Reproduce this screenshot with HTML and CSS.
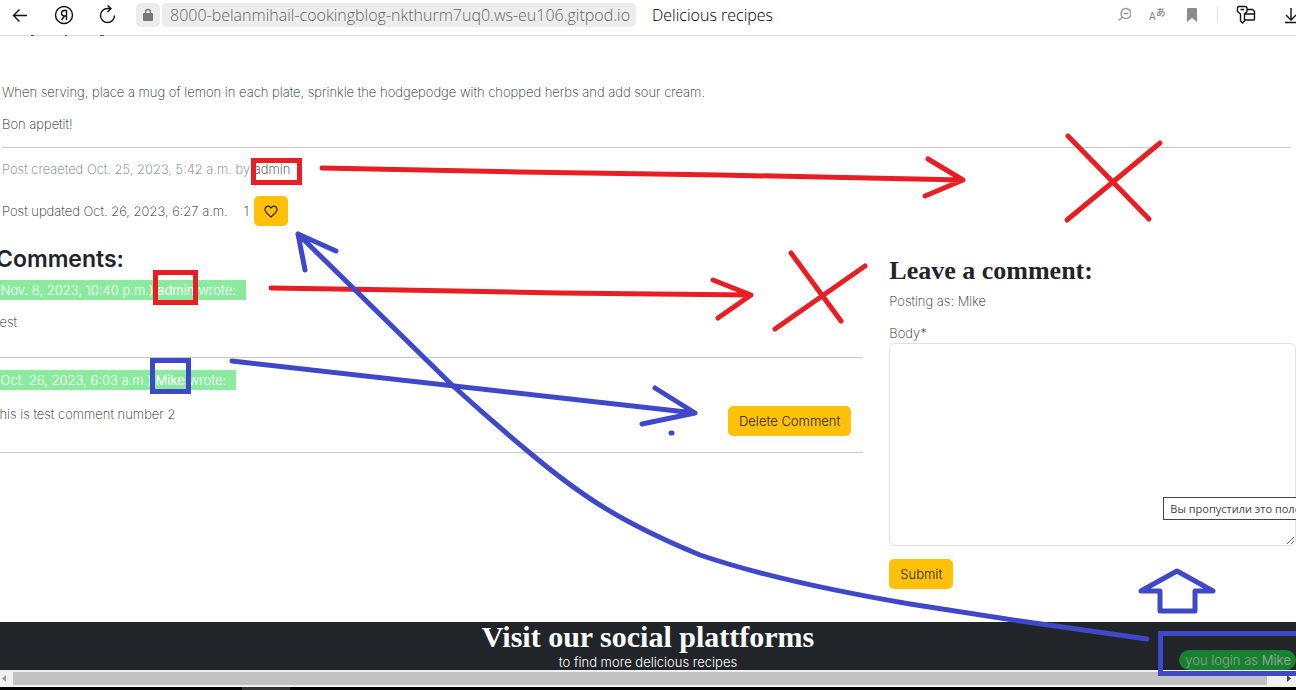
FILE: index.html
```html
<!DOCTYPE html>
<html lang="en">
<head>
<meta charset="utf-8">
<title>Delicious recipes</title>
<link rel="stylesheet" href="styles.css">
</head>
<body>
<header class="toolbar">
  <nav class="nav-buttons" aria-label="Browser">
    <button class="icon-btn" aria-label="Back"><svg width="20" height="20" viewBox="0 0 20 20"><path d="M17 10.500H3.500M9.500 4.500l-6 6 6 6"/></svg></button>
    <button class="icon-btn" aria-label="Home"><svg width="20" height="20" viewBox="0 0 20 20"><circle cx="10" cy="10" r="8.500"/><path d="M12.500 15V5.500H10.500C6.500 5.500 6.500 11 10.500 11H12.500M10.500 11L7.500 15"/></svg></button>
    <button class="icon-btn" aria-label="Reload"><svg width="20" height="20" viewBox="0 0 20 20"><path d="M12.500 3.500H9.500A7 7 0 1 0 16.500 10.500M9.500 0.500L13 3.500 9.500 7"/></svg></button>
  </nav>
  <div class="address">
    <button class="lock" aria-label="Site security"><svg width="12" height="14" viewBox="0 0 12 14"><rect x="1" y="5" width="10" height="8" rx="1" fill="#777"/><path d="M3.500 6V4a2.500 2.500 0 0 1 5 0V6" fill="none" stroke="#777" stroke-width="1.300"/></svg></button>
    <a class="url" href="#">8000-belanmihail-cookingblog-nkthurm7uq0.ws-eu106.gitpod.io</a>
  </div>
  <span class="page-title">Delicious recipes</span>
  <div class="tools">
    <button class="icon-btn muted" aria-label="Zoom out"><svg width="16" height="16" viewBox="0 0 16 16"><circle cx="11" cy="6.500" r="5"/><path d="M8.500 6.500h5M7.500 10L3.500 13.500"/></svg></button>
    <button class="icon-btn muted translate" aria-label="Translate"><span class="latin">A</span><span class="kana">あ</span></button>
    <button class="icon-btn muted" aria-label="Bookmark"><svg width="16" height="16" viewBox="0 0 16 16"><path d="M5 1h8a1 1 0 0 1 1 1v13l-5-4-5 4V2a1 1 0 0 1 1-1z" fill="#8c8c8c" stroke="none"/></svg></button>
    <span class="divider"></span>
    <button class="icon-btn" aria-label="Passwords"><svg width="20" height="20" viewBox="0 0 20 20"><path d="M3 1.500h6q2 0 2 2v3L8.500 9v7l-2 2-2-2V9L1.500 6.500v-3q0-2 1.500-2zM4.500 4.500h3.500M11 4.500h5.500l2 2v7.500q0 1-1 1H8.500M9 9h9.500"/></svg></button>
    <button class="icon-btn download" aria-label="Downloads"><svg width="20" height="20" viewBox="0 0 20 20"><path d="M10 3v12M5 10l5 5 5-5M4 17.500h14"/></svg></button>
  </div>
</header>

<main class="page">
  <article class="post">
    <p>When serving, place a mug of lemon in each plate, sprinkle the hodgepodge with chopped herbs and add sour cream.</p>
    <p>Bon appetit!</p>
    <hr>
    <p class="created">Post creaeted Oct. 25, 2023, 5:42 a.m. by <a href="#">admin</a></p>
    <div class="updated">
      <span>Post updated Oct. 26, 2023, 6:27 a.m.</span>
      <span class="likes">1 <button class="btn like" aria-label="Like"><svg width="14" height="13" viewBox="0 0 14 13"><path d="M7 12C5 10 1 7.500 1 4.500C1 1 5 0 7 3C9 0 13 1 13 4.500C13 7.500 9 10 7 12z" fill="none" stroke="#212529" stroke-width="1.200"/></svg></button></span>
    </div>
  </article>

  <div class="columns">
    <section class="comments">
      <h2>Comments:</h2>
      <div class="comment">
        <p class="meta">(Nov. 8, 2023, 10:40 p.m.) <b>admin</b> wrote:</p>
        <p>test</p>
      </div>
      <div class="comment own">
        <p class="meta">(Oct. 26, 2023, 6:03 a.m.) <b>Mike</b> wrote:</p>
        <div class="comment-row">
          <p>this is test comment number 2</p>
          <button class="btn delete">Delete Comment</button>
        </div>
      </div>
    </section>

    <section class="reply">
      <h3>Leave a comment:</h3>
      <p>Posting as: Mike</p>
      <form>
        <label for="body">Body*</label>
        <div class="field">
          <textarea id="body"></textarea>
          <span class="tip" role="tooltip">Вы пропустили это поле</span>
        </div>
        <button class="btn submit" type="button">Submit</button>
      </form>
    </section>
  </div>
</main>

<footer class="footer">
  <h2>Visit our social plattforms</h2>
  <p>to find more delicious recipes</p>
  <span class="login">you login as <b>Mike</b></span>
</footer>
<div class="scrollbar" aria-hidden="true">
  <svg width="13" height="17" viewBox="0 0 13 17"><path d="M6 5v7L2 8.500z" fill="#999"/></svg>
  <span class="thumb"></span>
  <svg width="29" height="17" viewBox="0 0 29 17"><path d="M20 5v7l4-3.500z" fill="#444"/></svg>
</div>
<div class="taskbar"><span></span></div>

<svg class="marks" viewBox="0 0 1296 690" aria-hidden="true">
  <path class="scrap" d="M31 35.500h3M65 35.500h2M100 35.500h4"/>
  <g class="red">
    <path d="M322 168L520 172 720 175 963 180M928 159L963 180 925 196"/>
    <path d="M1068 136L1149 219M1160 143L1067 220"/>
    <path d="M271 288L400 290 560 293 751 295M713 280L751 295 718 318"/>
    <path d="M791 253L841 321M865 266L775 329"/>
    <path class="box" d="M253.500 160.500h46v22h-46zM155.500 272.500h40v30h-40z"/>
  </g>
  <g class="blue">
    <path d="M232 361L695 413M655 388L695 413 642 424"/>
    <path d="M1147 639L1020 621 910 604C810 587 750 572 700 555C620 522 580 495 530 453C500 428 475 406 452 385L298 234M336 251L298 234 305 270"/>
    <path d="M671 433h1"/>
    <path d="M1177 571L1213 591H1195V611H1160V591H1141z"/>
    <path class="box" d="M152.500 360.500h36v31h-36zM1300 633.500H1160.500v40H1300"/>
  </g>
</svg>
</body>
</html>
```
FILE: styles.css
```css
* { box-sizing: border-box; }

body {
  position: relative;
  display: flex;
  flex-direction: column;
  min-height: 100vh;
  margin: 0;
  overflow-x: hidden;
  background: #fff;
  color: #212529;
  font: 200 13px/20px Inter, "Noto Sans", sans-serif;
}

p, h2, h3 { margin: 0; }
a { color: inherit; text-decoration: none; }
b { font-weight: 400; }
button { font: inherit; color: inherit; border: 0; cursor: pointer; }

.toolbar {
  display: flex;
  align-items: center;
  height: 36px;
  padding: 0 0 5px 10px;
  border-bottom: 1px solid #dcdcdc;
  color: #000;
  font: 300 16px/24px "Open Sans", "Noto Sans", sans-serif;
  white-space: nowrap;
}
.nav-buttons { display: flex; gap: 24px; }
.icon-btn {
  display: flex;
  align-items: center;
  padding: 0;
  background: none;
}
.icon-btn svg { fill: none; stroke: #111; stroke-width: 1.4; }
.icon-btn.muted svg { stroke: #999; }
.address { display: flex; gap: 2px; margin-left: 18px; }
.lock {
  display: grid;
  place-items: center;
  width: 24px;
  height: 24px;
  padding: 0;
  border-radius: 5px;
  background: #ececec;
}
.url {
  padding: 0 6px 0 8px;
  border-radius: 5px;
  background: #ececec;
  color: #666;
}
.page-title { margin-left: 16px; }
.tools {
  display: flex;
  align-items: center;
  gap: 18px;
  margin-left: auto;
  margin-right: -5px;
}
.translate {
  width: 16px;
  color: #888;
  font: 500 10px/16px "Liberation Sans", "Noto Sans CJK JP", sans-serif;
}
.translate .latin { padding-top: 4px; }
.translate .kana { padding-bottom: 4px; }
.divider { width: 1px; height: 16px; background: #ddd; }
.download { margin-left: 7px; }

.page { flex: 1; padding-top: 46px; overflow: hidden; }
.post { padding: 0 5px 0 2px; }
.post p { margin-bottom: 12px; }
.post hr { height: 1px; margin: 13px 0 11px; border: 0; background: #c8c9ca; }
.post .created { margin-bottom: 17px; color: #6c757d; }
.created a { color: #212529; }
.updated { display: flex; align-items: center; gap: 16px; }
.likes { display: flex; align-items: center; gap: 5px; }
.btn {
  height: 30px;
  padding: 0 11px;
  border-radius: 5px;
  background: #ffc107;
  font-weight: 300;
}
.btn.like { display: flex; align-items: center; padding: 0 10px; }

.columns {
  display: grid;
  grid-template-columns: 209fr 98fr;
  gap: 26px;
  margin-left: -4px;
}
.comments { padding-top: 20px; }
.comments h2 { margin-bottom: 7px; font: 600 23px/27px Inter, sans-serif; }
.comment { height: 78px; border-bottom: 1px solid #c8c9ca; }
.comment.own { height: 95px; padding-top: 12px; }
.meta {
  width: fit-content;
  margin-bottom: 12px;
  padding-right: 10px;
  background: #8aeb9e;
  color: #fff;
  font-weight: 300;
}
.comment-row {
  display: flex;
  justify-content: space-between;
  padding-right: 12px;
}
.comment-row p { padding-top: 2px; }
.delete { margin-top: 4px; }

.reply { padding-top: 30px; }
.reply h3 {
  margin-bottom: 6px;
  font: 700 26px/29px "Liberation Serif", serif;
}
.reply label { display: block; margin-top: 12px; }
.field { position: relative; display: flex; margin-bottom: 13px; }
.field textarea {
  width: 100%;
  height: 203px;
  border: 1px solid #dee2e6;
  border-radius: 6px;
  background: #fff;
  font: inherit;
}
.tip {
  position: absolute;
  left: 274px;
  bottom: 26px;
  padding: 0 6px;
  border: 1px solid #444;
  background: #fff;
  color: #444;
  font: 400 11px/21px "Open Sans", "Noto Sans", sans-serif;
  white-space: nowrap;
}

.footer {
  position: relative;
  height: 48px;
  background: #212529;
  color: #fff;
  font-weight: 300;
  text-align: center;
}
.footer h2 { font: 700 30px/30px "Liberation Serif", serif; }
.login {
  position: absolute;
  right: 0;
  bottom: 0;
  padding: 0 5px 0 6px;
  border-radius: 10px;
  background: #198032;
  color: #88a58f;
}
.scrollbar { display: flex; align-items: center; height: 17px; background: #f0f0f0; }
.thumb { flex: 1; height: 13px; background: #c1c1c1; }
.taskbar { height: 3px; background: #000; }
.taskbar span { display: block; width: 48px; height: 3px; margin-left: 242px; background: #333; }

.marks {
  position: absolute;
  top: 0;
  left: 0;
  width: 100%;
  pointer-events: none;
  fill: none;
  stroke-width: 5;
  stroke-linecap: round;
  stroke-linejoin: round;
}
.marks .red { stroke: #e81e25; }
.marks .blue { stroke: #3f48c8; }
.marks .box { stroke-linecap: butt; stroke-linejoin: miter; }
.marks .scrap { stroke: #555; stroke-width: 1; stroke-linecap: butt; }
```
